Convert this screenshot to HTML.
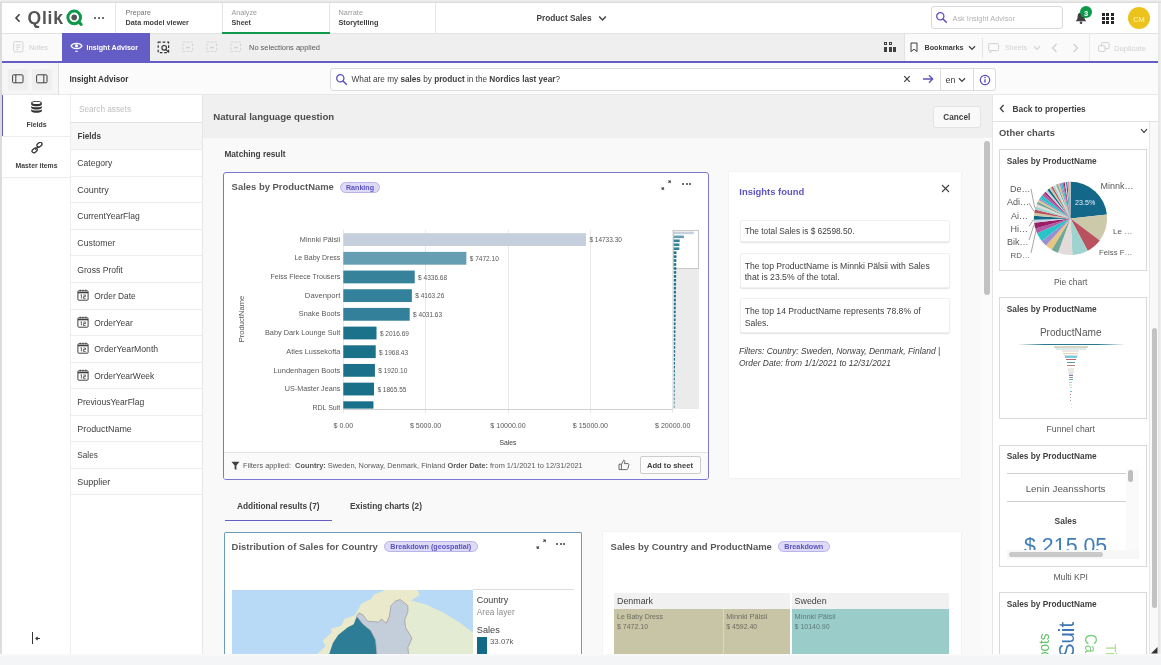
<!DOCTYPE html>
<html lang="en"><head><meta charset="utf-8"><title>Insight Advisor - Product Sales</title>
<style>
html,body{margin:0;padding:0;}
body{width:1161px;height:665px;overflow:hidden;background:#f4f5f7;position:relative;font-family:"Liberation Sans",sans-serif;}
#app{position:absolute;left:0;top:0;width:1161px;height:665px;overflow:hidden;will-change:transform;}
#app div,#app svg{position:absolute;}
#app .t{white-space:pre;}
#app .t b{font-weight:700;}
</style></head><body><div id="app">
<div style="left:2px;top:3px;width:1156px;height:652px;background:#fff;"></div>
<div style="left:0px;top:0px;width:1161px;height:3px;background:linear-gradient(#f3f3f3,#d9d9d9);"></div>
<div style="left:0px;top:2px;width:2px;height:653px;background:#dcdcdc;"></div>
<div style="left:1158px;top:3px;width:3px;height:652px;background:linear-gradient(90deg,#e4e4e4,#f0f0f0);"></div>
<div style="left:2px;top:33px;width:1156px;height:1px;background:#e3e3e3;"></div>
<svg style="left:14px;top:13.4px" width="8" height="10" viewBox="0 0 8 10"><path d="M5.6 1.2 L2 5 L5.6 8.8" fill="none" stroke="#404040" stroke-width="1.6"/></svg>
<div class="t" style="top:8.2px;font-size:17.5px;line-height:21.0px;color:#545454;font-weight:700;left:27.5px;letter-spacing:0.8px;">Qlik</div>
<svg style="left:66px;top:9px" width="19" height="19" viewBox="0 0 19 19"><circle cx="8.2" cy="8.4" r="6.3" fill="#fff" stroke="#0c9a4a" stroke-width="3"/><circle cx="8.2" cy="8.4" r="2.8" fill="#555"/><path d="M12.9 13.1 L15.2 15.4" stroke="#0c9a4a" stroke-width="3" stroke-linecap="round"/></svg>
<div style="left:94.3px;top:17px;width:2.2px;height:2.2px;background:#404040;border-radius:1.1px;"></div>
<div style="left:98.1px;top:17px;width:2.2px;height:2.2px;background:#404040;border-radius:1.1px;"></div>
<div style="left:101.89999999999999px;top:17px;width:2.2px;height:2.2px;background:#404040;border-radius:1.1px;"></div>
<div style="left:115px;top:3px;width:1px;height:30px;background:#e6e6e6;"></div>
<div style="left:222px;top:3px;width:1px;height:30px;background:#e6e6e6;"></div>
<div style="left:329px;top:3px;width:1px;height:30px;background:#e6e6e6;"></div>
<div style="left:435px;top:3px;width:1px;height:30px;background:#e6e6e6;"></div>
<div class="t" style="top:8.86px;font-size:7.17px;line-height:8.6px;color:#737373;left:125.5px;">Prepare</div>
<div class="t" style="top:19.33px;font-size:7.23px;line-height:8.68px;color:#404040;font-weight:700;left:125.5px;">Data model viewer</div>
<div class="t" style="top:8.86px;font-size:7.17px;line-height:8.6px;color:#9a9a9a;left:231.5px;">Analyze</div>
<div class="t" style="top:19.36px;font-size:7.16px;line-height:8.59px;color:#404040;font-weight:700;left:231.5px;">Sheet</div>
<div class="t" style="top:8.77px;font-size:7.35px;line-height:8.82px;color:#9a9a9a;left:338.5px;">Narrate</div>
<div class="t" style="top:19.31px;font-size:7.27px;line-height:8.72px;color:#404040;font-weight:700;left:338.5px;">Storytelling</div>
<div style="left:222px;top:32.4px;width:108px;height:1.6px;background:#109a4e;"></div>
<div class="t" style="top:14.44px;font-size:8.25px;line-height:9.9px;color:#404040;font-weight:700;left:536.5px;">Product Sales</div>
<svg style="left:598px;top:15px" width="9" height="7" viewBox="0 0 9 7"><path d="M1.2 1.5 L4.5 5 L7.8 1.5" fill="none" stroke="#404040" stroke-width="1.4"/></svg>
<div style="left:931px;top:6px;width:132px;height:23px;border:1px solid #d9d9d9;border-radius:3px;background:#fff;box-sizing:border-box;"></div>
<svg style="left:935px;top:11px" width="13" height="13" viewBox="0 0 13 13"><circle cx="5.3" cy="5.3" r="3.6" fill="none" stroke="#5b52c0" stroke-width="1.3"/><path d="M8 8 L11.3 11.3" stroke="#5b52c0" stroke-width="1.5" stroke-linecap="round"/></svg>
<div class="t" style="top:14.85px;font-size:7.4px;line-height:8.88px;color:#b3b3b3;left:952.5px;">Ask Insight Advisor</div>
<svg style="left:1074px;top:11px" width="14" height="14" viewBox="0 0 14 14"><path d="M7 1.5 C4.6 1.5 3.6 3.4 3.6 5.6 C3.6 8.2 2.6 9.2 1.8 10.2 L12.2 10.2 C11.4 9.2 10.4 8.2 10.4 5.6 C10.4 3.4 9.4 1.5 7 1.5 Z" fill="#404040"/><circle cx="7" cy="11.8" r="1.3" fill="#404040"/></svg>
<div style="left:1080px;top:6px;width:12px;height:12px;background:#0c9a4a;border-radius:6px;"></div>
<div class="t" style="top:8.6px;font-size:7.5px;line-height:9.0px;color:#fff;font-weight:700;left:886px;width:400px;text-align:center;">3</div>
<div style="left:1102.3px;top:12.6px;width:3px;height:3px;background:#262626;"></div>
<div style="left:1106.3999999999999px;top:12.6px;width:3px;height:3px;background:#262626;"></div>
<div style="left:1110.5px;top:12.6px;width:3px;height:3px;background:#262626;"></div>
<div style="left:1102.3px;top:16.7px;width:3px;height:3px;background:#262626;"></div>
<div style="left:1106.3999999999999px;top:16.7px;width:3px;height:3px;background:#262626;"></div>
<div style="left:1110.5px;top:16.7px;width:3px;height:3px;background:#262626;"></div>
<div style="left:1102.3px;top:20.799999999999997px;width:3px;height:3px;background:#262626;"></div>
<div style="left:1106.3999999999999px;top:20.799999999999997px;width:3px;height:3px;background:#262626;"></div>
<div style="left:1110.5px;top:20.799999999999997px;width:3px;height:3px;background:#262626;"></div>
<div style="left:1128px;top:7px;width:22px;height:22px;background:#ecc31d;border-radius:11px;"></div>
<div class="t" style="top:14.7px;font-size:7.5px;line-height:9.0px;color:#fff3c4;left:939px;width:400px;text-align:center;">CM</div>
<div style="left:2px;top:34px;width:1156px;height:27px;background:#efefef;"></div>
<div style="left:2px;top:34px;width:60px;height:27px;background:#fafafa;"></div>
<div style="left:904px;top:34px;width:254px;height:27px;background:#fafafa;"></div>
<div style="left:62px;top:33px;width:88px;height:28px;background:#655dc6;"></div>
<div style="left:2px;top:61px;width:1156px;height:2px;background:#655dc6;"></div>
<svg style="left:13px;top:41px" width="11" height="12" viewBox="0 0 11 12"><rect x="0.7" y="0.7" width="9.2" height="10.2" rx="1" fill="none" stroke="#d4d4d4" stroke-width="1"/><path d="M3 4 H7.5 M3 6.2 H7.5 M3 8.4 H5.5" stroke="#d4d4d4" stroke-width="0.9"/></svg>
<div class="t" style="top:44.11px;font-size:7.27px;line-height:8.72px;color:#cfcfcf;left:29px;">Notes</div>
<svg style="left:70px;top:41px" width="13" height="12" viewBox="0 0 13 12"><path d="M1 5 C3 1.6 10 1.6 12 5 C10 8.4 3 8.4 1 5 Z" fill="none" stroke="#fff" stroke-width="1.2"/><circle cx="6.5" cy="4.8" r="1.6" fill="#fff"/><path d="M5.2 10.3 H7.8" stroke="#fff" stroke-width="1.1"/></svg>
<div class="t" style="top:44.39px;font-size:7.11px;line-height:8.53px;color:#fff;font-weight:700;left:86.5px;">Insight Advisor</div>
<svg style="left:157px;top:41px" width="13" height="13" viewBox="0 0 13 13"><rect x="1.2" y="1.2" width="10.4" height="10.4" fill="none" stroke="#333" stroke-width="1.2" stroke-dasharray="2.6 1.9"/><circle cx="7.2" cy="6.8" r="2.3" fill="#efefef" stroke="#333" stroke-width="1.1"/><path d="M9 8.6 L11.6 11.2" stroke="#333" stroke-width="1.3"/></svg>
<svg style="left:182px;top:41px" width="13" height="13" viewBox="0 0 13 13"><rect x="1" y="1" width="9.5" height="9.5" fill="none" stroke="#d2d2d2" stroke-width="1" stroke-dasharray="2.2 1.6"/><path d="M4 6.5 H8" stroke="#d2d2d2" stroke-width="1.4"/></svg>
<svg style="left:206px;top:41px" width="13" height="13" viewBox="0 0 13 13"><rect x="1" y="1" width="9.5" height="9.5" fill="none" stroke="#d2d2d2" stroke-width="1" stroke-dasharray="2.2 1.6"/><path d="M4 6.5 H8" stroke="#d2d2d2" stroke-width="1.4"/></svg>
<svg style="left:230px;top:41px" width="13" height="13" viewBox="0 0 13 13"><rect x="1" y="1" width="9.5" height="9.5" fill="none" stroke="#d2d2d2" stroke-width="1" stroke-dasharray="2.2 1.6"/><path d="M4 6.5 H8" stroke="#d2d2d2" stroke-width="1.4"/></svg>
<div class="t" style="top:44.02px;font-size:7.47px;line-height:8.96px;color:#595959;left:249px;">No selections applied</div>
<div style="left:884.3px;top:42.3px;width:3px;height:3px;border:0.8px solid #404040;box-sizing:border-box;"></div>
<div style="left:888.5px;top:42.3px;width:3px;height:3px;border:0.8px solid #404040;box-sizing:border-box;"></div>
<div style="left:884.3px;top:47.2px;width:3px;height:4.6px;background:#404040;"></div>
<div style="left:888.5px;top:47.2px;width:3px;height:4.6px;background:#404040;"></div>
<div style="left:892.6999999999999px;top:47.2px;width:3px;height:4.6px;background:#404040;"></div>
<div style="left:904px;top:34px;width:1px;height:27px;background:#e3e3e3;"></div>
<svg style="left:910px;top:42px" width="8" height="11" viewBox="0 0 8 11"><path d="M1 1 H7 V9.6 L4 7.2 L1 9.6 Z" fill="none" stroke="#404040" stroke-width="1"/></svg>
<div class="t" style="top:44.26px;font-size:7.16px;line-height:8.59px;color:#404040;font-weight:700;left:924.5px;">Bookmarks</div>
<svg style="left:968px;top:45px" width="8" height="6" viewBox="0 0 8 6"><path d="M1 1.2 L4 4.4 L7 1.2" fill="none" stroke="#404040" stroke-width="1.3"/></svg>
<div style="left:982px;top:38px;width:1px;height:20px;background:#e3e3e3;"></div>
<svg style="left:988px;top:43px" width="12" height="10" viewBox="0 0 12 10"><rect x="0.6" y="0.6" width="10" height="7" rx="1" fill="none" stroke="#d0d0d0"/><path d="M1 9 H4" stroke="#d0d0d0"/></svg>
<div class="t" style="top:44.21px;font-size:7.07px;line-height:8.48px;color:#d2d2d2;left:1005px;">Sheets</div>
<svg style="left:1033px;top:45px" width="8" height="6" viewBox="0 0 8 6"><path d="M1 1.2 L4 4.4 L7 1.2" fill="none" stroke="#d2d2d2" stroke-width="1.2"/></svg>
<svg style="left:1051px;top:43px" width="7" height="10" viewBox="0 0 7 10"><path d="M5.5 1 L1.5 5 L5.5 9" fill="none" stroke="#cfcfcf" stroke-width="1.2"/></svg>
<svg style="left:1072px;top:43px" width="7" height="10" viewBox="0 0 7 10"><path d="M1.5 1 L5.5 5 L1.5 9" fill="none" stroke="#cfcfcf" stroke-width="1.2"/></svg>
<div style="left:1089px;top:34px;width:1px;height:27px;background:#e9e9e9;"></div>
<svg style="left:1098px;top:42px" width="12" height="11" viewBox="0 0 12 11"><rect x="3.6" y="0.6" width="7.5" height="6" rx="0.8" fill="none" stroke="#d0d0d0"/><rect x="0.6" y="3.8" width="6.5" height="5.6" rx="0.8" fill="#fafafa" stroke="#d0d0d0"/></svg>
<div class="t" style="top:43.91px;font-size:7.68px;line-height:9.22px;color:#d2d2d2;left:1114px;">Duplicate</div>
<div style="left:2px;top:63px;width:1156px;height:31.5px;background:#fbfbfb;"></div>
<div style="left:2px;top:63px;width:56px;height:31.5px;background:#f6f6f6;"></div>
<div style="left:2px;top:94px;width:1156px;height:1px;background:#e9e9e9;"></div>
<div style="left:58px;top:63px;width:1px;height:31px;background:#e0e0e0;"></div>
<div style="left:8px;top:68.5px;width:20px;height:21px;background:#efefef;border-radius:2px;"></div>
<div style="left:32px;top:68.5px;width:20px;height:21px;background:#efefef;border-radius:2px;"></div>
<svg style="left:12px;top:74px" width="12" height="10" viewBox="0 0 12 10"><rect x="0.6" y="0.8" width="10.4" height="8" rx="1" fill="none" stroke="#404040" stroke-width="1"/><path d="M3.8 1 V8.8" stroke="#404040" stroke-width="1"/></svg>
<svg style="left:36px;top:74px" width="12" height="10" viewBox="0 0 12 10"><rect x="0.6" y="0.8" width="10.4" height="8" rx="1" fill="none" stroke="#404040" stroke-width="1"/><path d="M7.8 1 V8.8" stroke="#404040" stroke-width="1"/></svg>
<div class="t" style="top:75.39px;font-size:8.15px;line-height:9.78px;color:#333;font-weight:700;left:69.5px;">Insight Advisor</div>
<div style="left:330px;top:68px;width:666px;height:22.5px;background:#fff;border:1px solid #dcdcdc;border-radius:3px;box-sizing:border-box;"></div>
<svg style="left:335px;top:73px" width="13" height="13" viewBox="0 0 13 13"><circle cx="5.3" cy="5.3" r="3.6" fill="none" stroke="#5b52c0" stroke-width="1.3"/><path d="M8 8 L11.3 11.3" stroke="#5b52c0" stroke-width="1.5" stroke-linecap="round"/></svg>
<div class="t" style="left:351.6px;top:75.36px;font-size:8.21px;line-height:9.85px;color:#404040;">What are my <b>sales</b> by <b>product</b> in the <b>Nordics last year</b>?</div>
<svg style="left:903px;top:75px" width="8" height="8" viewBox="0 0 8 8"><path d="M1.2 1.2 L6.8 6.8 M6.8 1.2 L1.2 6.8" stroke="#404040" stroke-width="1.2"/></svg>
<svg style="left:922px;top:74px" width="12" height="10" viewBox="0 0 12 10"><path d="M1 5 H10.5 M7 1.3 L10.7 5 L7 8.7" fill="none" stroke="#5b52c0" stroke-width="1.3"/></svg>
<div style="left:939.5px;top:68px;width:1px;height:22.5px;background:#dcdcdc;"></div>
<div class="t" style="top:74.88px;font-size:8.99px;line-height:10.79px;color:#404040;left:945.5px;">en</div>
<svg style="left:958px;top:76.5px" width="8" height="6" viewBox="0 0 8 6"><path d="M1 1.2 L4 4.4 L7 1.2" fill="none" stroke="#404040" stroke-width="1.3"/></svg>
<div style="left:973px;top:68px;width:1px;height:22.5px;background:#dcdcdc;"></div>
<svg style="left:978.5px;top:73.5px" width="12" height="12" viewBox="0 0 12 12"><circle cx="6" cy="6" r="4.7" fill="none" stroke="#5b52c0" stroke-width="1.2"/><path d="M6 5.2 V8.6" stroke="#5b52c0" stroke-width="1.4"/><circle cx="6" cy="3.5" r="0.8" fill="#5b52c0"/></svg>
<div style="left:2px;top:95px;width:68px;height:559px;background:#fff;"></div>
<div style="left:70px;top:95px;width:1px;height:559px;background:#ededed;"></div>
<div style="left:2px;top:95px;width:1px;height:41px;background:#655dc6;"></div>
<div style="left:2px;top:136px;width:68px;height:1px;background:#ececec;"></div>
<div style="left:2px;top:177px;width:68px;height:1px;background:#ececec;"></div>
<svg style="left:30px;top:99.5px" width="13" height="14" viewBox="0 0 13 14"><g fill="#333"><path d="M1.2 9.2 C1.2 11 11.8 11 11.8 9.2 V11 C11.8 13.4 1.2 13.4 1.2 11 Z"/><path d="M1.2 5.9 C1.2 7.7 11.8 7.7 11.8 5.9 V7.7 C11.8 10.1 1.2 10.1 1.2 7.7 Z"/><path d="M1.2 2.8 C1.2 0.4 11.8 0.4 11.8 2.8 V4.4 C11.8 6.8 1.2 6.8 1.2 4.4 Z"/></g><ellipse cx="6.5" cy="2.9" rx="4" ry="1.1" fill="#fff"/></svg>
<div class="t" style="top:120.68px;font-size:6.92px;line-height:8.3px;color:#404040;font-weight:700;left:-163.5px;width:400px;text-align:center;">Fields</div>
<svg style="left:30.5px;top:141.5px" width="12" height="12" viewBox="0 0 12 12"><rect x="5.6" y="0.9" width="5.6" height="3.6" rx="1.8" transform="rotate(-40 8.4 2.7)" fill="none" stroke="#333" stroke-width="1.3"/><rect x="0.8" y="6.6" width="5.6" height="3.6" rx="1.8" transform="rotate(-40 3.6 8.4)" fill="none" stroke="#333" stroke-width="1.3"/><path d="M4.2 7.4 L7.6 4.4" stroke="#333" stroke-width="1.3"/></svg>
<div class="t" style="top:162.0px;font-size:6.87px;line-height:8.24px;color:#404040;font-weight:700;left:-163.5px;width:400px;text-align:center;">Master items</div>
<div style="left:32px;top:632px;width:1.2px;height:12px;background:#333;"></div>
<svg style="left:34.5px;top:635.5px" width="6" height="5" viewBox="0 0 6 5"><path d="M1 2.5 H5 M2.6 0.8 L0.9 2.5 L2.6 4.2" fill="none" stroke="#333" stroke-width="1.1"/></svg>
<div style="left:71px;top:95px;width:131px;height:559px;background:#fff;"></div>
<div style="left:202px;top:95px;width:1px;height:559px;background:#e6e6e6;"></div>
<div class="t" style="top:104.56px;font-size:8.21px;line-height:9.85px;color:#bdbdbd;left:79px;">Search assets</div>
<div style="left:71px;top:122px;width:131px;height:1px;background:#e3e3e3;"></div>
<div style="left:71px;top:123px;width:131px;height:26px;background:#f7f7f7;"></div>
<div class="t" style="top:132.4px;font-size:8.13px;line-height:9.76px;color:#404040;font-weight:700;left:77.5px;">Fields</div>
<div style="left:71px;top:149.1px;width:131px;height:1px;background:#ececec;"></div>
<div class="t" style="top:158.26px;font-size:8.63px;line-height:10.36px;color:#404040;left:77.3px;">Category</div>
<div style="left:71px;top:175.7px;width:131px;height:1px;background:#ececec;"></div>
<div class="t" style="top:184.64px;font-size:9.0px;line-height:10.8px;color:#404040;left:77.3px;">Country</div>
<div style="left:71px;top:202.2px;width:131px;height:1px;background:#ececec;"></div>
<div class="t" style="top:211.41px;font-size:8.56px;line-height:10.27px;color:#404040;left:77.3px;">CurrentYearFlag</div>
<div style="left:71px;top:228.8px;width:131px;height:1px;background:#ececec;"></div>
<div class="t" style="top:237.87px;font-size:8.77px;line-height:10.52px;color:#404040;left:77.3px;">Customer</div>
<div style="left:71px;top:255.4px;width:131px;height:1px;background:#ececec;"></div>
<div class="t" style="top:264.5px;font-size:8.62px;line-height:10.34px;color:#404040;left:77.3px;">Gross Profit</div>
<div style="left:71px;top:281.9px;width:131px;height:1px;background:#ececec;"></div>
<svg style="left:77px;top:288.9px" width="12" height="12" viewBox="0 0 12 12"><rect x="0.9" y="1.8" width="10.2" height="9.4" rx="0.8" fill="#fff" stroke="#404040" stroke-width="1"/><path d="M1 3.6 H11" stroke="#404040" stroke-width="1.4"/><path d="M3.2 0.6 V2.4 M6 0.6 V2.4 M8.8 0.6 V2.4" stroke="#404040" stroke-width="1"/><path d="M3.6 6 L4.4 5.6 V9.4 M6.4 6 H8.4 V7.6 H6.4 V9.4 H8.6" fill="none" stroke="#404040" stroke-width="0.8"/></svg>
<div class="t" style="top:291.17px;font-size:8.39px;line-height:10.07px;color:#404040;left:94.3px;">Order Date</div>
<div style="left:71px;top:308.5px;width:131px;height:1px;background:#ececec;"></div>
<svg style="left:77px;top:315.5px" width="12" height="12" viewBox="0 0 12 12"><rect x="0.9" y="1.8" width="10.2" height="9.4" rx="0.8" fill="#fff" stroke="#404040" stroke-width="1"/><path d="M1 3.6 H11" stroke="#404040" stroke-width="1.4"/><path d="M3.2 0.6 V2.4 M6 0.6 V2.4 M8.8 0.6 V2.4" stroke="#404040" stroke-width="1"/><path d="M3.6 6 L4.4 5.6 V9.4 M6.4 6 H8.4 V7.6 H6.4 V9.4 H8.6" fill="none" stroke="#404040" stroke-width="0.8"/></svg>
<div class="t" style="top:317.72px;font-size:8.41px;line-height:10.09px;color:#404040;left:94.3px;">OrderYear</div>
<div style="left:71px;top:335.0px;width:131px;height:1px;background:#ececec;"></div>
<svg style="left:77px;top:342.0px" width="12" height="12" viewBox="0 0 12 12"><rect x="0.9" y="1.8" width="10.2" height="9.4" rx="0.8" fill="#fff" stroke="#404040" stroke-width="1"/><path d="M1 3.6 H11" stroke="#404040" stroke-width="1.4"/><path d="M3.2 0.6 V2.4 M6 0.6 V2.4 M8.8 0.6 V2.4" stroke="#404040" stroke-width="1"/><path d="M3.6 6 L4.4 5.6 V9.4 M6.4 6 H8.4 V7.6 H6.4 V9.4 H8.6" fill="none" stroke="#404040" stroke-width="0.8"/></svg>
<div class="t" style="top:344.14px;font-size:8.7px;line-height:10.44px;color:#404040;left:94.3px;">OrderYearMonth</div>
<div style="left:71px;top:361.6px;width:131px;height:1px;background:#ececec;"></div>
<svg style="left:77px;top:368.6px" width="12" height="12" viewBox="0 0 12 12"><rect x="0.9" y="1.8" width="10.2" height="9.4" rx="0.8" fill="#fff" stroke="#404040" stroke-width="1"/><path d="M1 3.6 H11" stroke="#404040" stroke-width="1.4"/><path d="M3.2 0.6 V2.4 M6 0.6 V2.4 M8.8 0.6 V2.4" stroke="#404040" stroke-width="1"/><path d="M3.6 6 L4.4 5.6 V9.4 M6.4 6 H8.4 V7.6 H6.4 V9.4 H8.6" fill="none" stroke="#404040" stroke-width="0.8"/></svg>
<div class="t" style="top:370.83px;font-size:8.43px;line-height:10.12px;color:#404040;left:94.3px;">OrderYearWeek</div>
<div style="left:71px;top:388.2px;width:131px;height:1px;background:#ececec;"></div>
<div class="t" style="top:397.34px;font-size:8.53px;line-height:10.24px;color:#404040;left:77.3px;">PreviousYearFlag</div>
<div style="left:71px;top:414.7px;width:131px;height:1px;background:#ececec;"></div>
<div class="t" style="top:423.72px;font-size:8.91px;line-height:10.69px;color:#404040;left:77.3px;">ProductName</div>
<div style="left:71px;top:441.3px;width:131px;height:1px;background:#ececec;"></div>
<div class="t" style="top:450.62px;font-size:8.2px;line-height:9.84px;color:#404040;left:77.3px;">Sales</div>
<div style="left:71px;top:467.8px;width:131px;height:1px;background:#ececec;"></div>
<div class="t" style="top:476.8px;font-size:8.99px;line-height:10.79px;color:#404040;left:77.3px;">Supplier</div>
<div style="left:71px;top:494.4px;width:131px;height:1px;background:#ececec;"></div>
<div style="left:203px;top:95px;width:789px;height:559px;background:#f9f9f9;"></div>
<div style="left:203px;top:95px;width:789px;height:42.5px;background:#f0f0f0;"></div>
<div class="t" style="top:111.07px;font-size:9.64px;line-height:11.57px;color:#4d4d4d;font-weight:700;left:213.3px;">Natural language question</div>
<div style="left:932.5px;top:106px;width:48.5px;height:21.5px;background:#f9f9f9;border:1px solid #e4e4e4;border-radius:3px;box-sizing:border-box;"></div>
<div class="t" style="top:113.05px;font-size:8.23px;line-height:9.88px;color:#404040;font-weight:700;left:756.8px;width:400px;text-align:center;">Cancel</div>
<div class="t" style="top:150.22px;font-size:8.28px;line-height:9.94px;color:#404040;font-weight:700;left:224.4px;">Matching result</div>
<div style="left:983px;top:137.5px;width:9px;height:517px;background:#fbfbfb;"></div>
<div style="left:984.3px;top:140.5px;width:5.5px;height:154.5px;background:#c2c2c2;border-radius:3px;"></div>
<div style="left:223px;top:171.5px;width:485.7px;height:308.5px;background:#fff;border:1.6px solid #7d76d3;border-radius:3px;box-sizing:border-box;"></div>
<div class="t" style="top:181.26px;font-size:9.45px;line-height:11.34px;color:#595959;font-weight:700;left:231.6px;">Sales by ProductName</div>
<div style="left:340px;top:181.5px;width:40px;height:11.2px;background:#dddaf6;border:1px solid #b9b3ea;border-radius:6px;box-sizing:border-box;"></div>
<div class="t" style="top:183.79px;font-size:7.1px;line-height:8.52px;color:#5b52c0;font-weight:700;left:160px;width:400px;text-align:center;">Ranking</div>
<svg style="left:660px;top:179px" width="12" height="12" viewBox="0 0 12 12"><path d="M7.8 1.4 H10.8 V4.4 Z M1.6 7.8 V10.8 H4.6 Z" fill="#404040"/><path d="M8.4 3.8 L9.8 2.4 M2.6 9.8 L4 8.4" stroke="#404040" stroke-width="1.1"/></svg>
<div style="left:682.3px;top:183.4px;width:2px;height:2px;background:#404040;border-radius:1px;"></div>
<div style="left:685.8px;top:183.4px;width:2px;height:2px;background:#404040;border-radius:1px;"></div>
<div style="left:689.3px;top:183.4px;width:2px;height:2px;background:#404040;border-radius:1px;"></div>
<div style="left:342.8px;top:229.5px;width:1px;height:183px;background:#e9e9e9;"></div>
<div style="left:425.1px;top:229.5px;width:1px;height:183px;background:#e9e9e9;"></div>
<div style="left:507.5px;top:229.5px;width:1px;height:183px;background:#e9e9e9;"></div>
<div style="left:589.9px;top:229.5px;width:1px;height:183px;background:#e9e9e9;"></div>
<div style="left:672.2px;top:229.5px;width:1px;height:183px;background:#e9e9e9;"></div>
<div style="left:343.3px;top:408.6px;width:330px;height:1px;background:#d0d0d0;"></div>
<div class="t" style="top:235.6px;font-size:7.29px;line-height:8.75px;color:#595959;left:-59.69999999999999px;width:400px;text-align:right;">Minnki Pälsii</div>
<div class="t" style="top:236.48px;font-size:6.49px;line-height:7.79px;color:#595959;left:589.4px;">$ 14733.30</div>
<div class="t" style="top:254.44px;font-size:7.01px;line-height:8.41px;color:#595959;left:-59.69999999999999px;width:400px;text-align:right;">Le Baby Dress</div>
<div class="t" style="top:255.17px;font-size:6.52px;line-height:7.82px;color:#595959;left:469.8px;">$ 7472.10</div>
<div class="t" style="top:273.08px;font-size:7.12px;line-height:8.54px;color:#595959;left:-59.69999999999999px;width:400px;text-align:right;">Feiss Fleece Trousers</div>
<div class="t" style="top:273.87px;font-size:6.52px;line-height:7.82px;color:#595959;left:418.1px;">$ 4336.68</div>
<div class="t" style="top:291.41px;font-size:7.69px;line-height:9.23px;color:#595959;left:-59.69999999999999px;width:400px;text-align:right;">Davenport</div>
<div class="t" style="top:292.47px;font-size:6.52px;line-height:7.82px;color:#595959;left:415.3px;">$ 4163.26</div>
<div class="t" style="top:310.29px;font-size:7.32px;line-height:8.78px;color:#595959;left:-59.69999999999999px;width:400px;text-align:right;">Snake Boots</div>
<div class="t" style="top:311.17px;font-size:6.52px;line-height:7.82px;color:#595959;left:413.1px;">$ 4031.63</div>
<div class="t" style="top:328.98px;font-size:7.34px;line-height:8.81px;color:#595959;left:-59.69999999999999px;width:400px;text-align:right;">Baby Dark Lounge Suit</div>
<div class="t" style="top:329.87px;font-size:6.52px;line-height:7.82px;color:#595959;left:379.9px;">$ 2016.69</div>
<div class="t" style="top:347.67px;font-size:7.36px;line-height:8.83px;color:#595959;left:-59.69999999999999px;width:400px;text-align:right;">Atles Lussekofta</div>
<div class="t" style="top:348.57px;font-size:6.52px;line-height:7.82px;color:#595959;left:379.1px;">$ 1968.43</div>
<div class="t" style="top:366.31px;font-size:7.48px;line-height:8.98px;color:#595959;left:-59.69999999999999px;width:400px;text-align:right;">Lundenhagen Boots</div>
<div class="t" style="top:367.27px;font-size:6.52px;line-height:7.82px;color:#595959;left:378.3px;">$ 1920.10</div>
<div class="t" style="top:385.05px;font-size:7.19px;line-height:8.63px;color:#595959;left:-59.69999999999999px;width:400px;text-align:right;">US-Master Jeans</div>
<div class="t" style="top:385.87px;font-size:6.52px;line-height:7.82px;color:#595959;left:377.4px;">$ 1865.55</div>
<div class="t" style="top:403.81px;font-size:7.06px;line-height:8.47px;color:#595959;left:-59.69999999999999px;width:400px;text-align:right;">RDL Suit</div>
<svg style="left:330px;top:225px" width="370" height="190" viewBox="0 0 370 190"><rect x="13.3" y="8.2" width="242.66" height="12.8" fill="#c5d0dc"/><rect x="13.3" y="26.88" width="123.07" height="12.8" fill="#659db2"/><rect x="13.3" y="45.56" width="71.43" height="12.8" fill="#35829a"/><rect x="13.3" y="64.24" width="68.57" height="12.8" fill="#33819a"/><rect x="13.3" y="82.92" width="66.4" height="12.8" fill="#328099"/><rect x="13.3" y="101.6" width="33.21" height="12.8" fill="#1d728b"/><rect x="13.3" y="120.28" width="32.42" height="12.8" fill="#1c718a"/><rect x="13.3" y="138.96" width="31.62" height="12.8" fill="#1b708a"/><rect x="13.3" y="157.64" width="30.73" height="12.8" fill="#1a7089"/><rect x="13.3" y="176.32" width="30.14" height="7.28" fill="#19708a"/></svg>
<div class="t" style="top:422.12px;font-size:7.05px;line-height:8.46px;color:#595959;left:143.3px;width:400px;text-align:center;">$ 0.00</div>
<div class="t" style="top:422.12px;font-size:7.05px;line-height:8.46px;color:#595959;left:225.60000000000002px;width:400px;text-align:center;">$ 5000.00</div>
<div class="t" style="top:422.12px;font-size:7.05px;line-height:8.46px;color:#595959;left:308.0px;width:400px;text-align:center;">$ 10000.00</div>
<div class="t" style="top:422.12px;font-size:7.05px;line-height:8.46px;color:#595959;left:390.4px;width:400px;text-align:center;">$ 15000.00</div>
<div class="t" style="top:422.12px;font-size:7.05px;line-height:8.46px;color:#595959;left:472.70000000000005px;width:400px;text-align:center;">$ 20000.00</div>
<div class="t" style="top:438.74px;font-size:6.8px;line-height:8.16px;color:#404040;left:308px;width:400px;text-align:center;">Sales</div>
<div class="t" style="left:142.4px;top:313.5px;width:200px;text-align:center;font-size:7.6px;line-height:10px;color:#595959;transform:rotate(-90deg);">ProductName</div>
<div style="left:672.8px;top:229.5px;width:26.5px;height:179.5px;background:#ebebeb;"></div>
<div style="left:672.8px;top:229.5px;width:26.5px;height:39.5px;background:#fff;border:1px solid #c9c9c9;box-sizing:border-box;"></div>
<svg style="left:672.8px;top:229.5px" width="27" height="180" viewBox="0 0 27 180"><rect x="0.8" y="1.6" width="20" height="2.6" fill="#c5d0dc"/><rect x="0.8" y="5.55" width="10.1" height="2.6" fill="#659db2"/><rect x="0.8" y="9.5" width="5.9" height="2.6" fill="#35829a"/><rect x="0.8" y="13.45" width="5.6" height="2.6" fill="#33819a"/><rect x="0.8" y="17.4" width="5.5" height="2.6" fill="#328099"/><rect x="0.8" y="21.35" width="2.7" height="2.6" fill="#1d728b"/><rect x="0.8" y="25.3" width="2.7" height="2.6" fill="#1d728b"/><rect x="0.8" y="29.25" width="2.6" height="2.6" fill="#1d728b"/><rect x="0.8" y="33.2" width="2.5" height="2.6" fill="#1d728b"/><rect x="0.8" y="37.15" width="2.5" height="2.6" fill="#1d728b"/><rect x="0.8" y="41.1" width="2.4" height="2.6" fill="#1d728b"/><rect x="0.8" y="45.05" width="2.35" height="2.6" fill="#1d728b"/><rect x="0.8" y="49.0" width="2.3" height="2.6" fill="#1d728b"/><rect x="0.8" y="52.95" width="2.24" height="2.6" fill="#1d728b"/><rect x="0.8" y="56.9" width="2.19" height="2.6" fill="#1d728b"/><rect x="0.8" y="60.85" width="2.14" height="2.6" fill="#1d728b"/><rect x="0.8" y="64.8" width="2.09" height="2.6" fill="#1d728b"/><rect x="0.8" y="68.75" width="2.04" height="2.6" fill="#1d728b"/><rect x="0.8" y="72.7" width="1.98" height="2.6" fill="#1d728b"/><rect x="0.8" y="76.65" width="1.93" height="2.6" fill="#1d728b"/><rect x="0.8" y="80.6" width="1.88" height="2.6" fill="#1d728b"/><rect x="0.8" y="84.55" width="1.83" height="2.6" fill="#1d728b"/><rect x="0.8" y="88.5" width="1.78" height="2.6" fill="#1d728b"/><rect x="0.8" y="92.45" width="1.72" height="2.6" fill="#1d728b"/><rect x="0.8" y="96.4" width="1.67" height="2.6" fill="#1d728b"/><rect x="0.8" y="100.35" width="1.62" height="2.6" fill="#1d728b"/><rect x="0.8" y="104.3" width="1.57" height="2.6" fill="#1d728b"/><rect x="0.8" y="108.25" width="1.52" height="2.6" fill="#1d728b"/><rect x="0.8" y="112.2" width="1.46" height="2.6" fill="#1d728b"/><rect x="0.8" y="116.15" width="1.41" height="2.6" fill="#1d728b"/><rect x="0.8" y="120.1" width="1.36" height="2.6" fill="#1d728b"/><rect x="0.8" y="124.05" width="1.31" height="2.6" fill="#1d728b"/><rect x="0.8" y="128.0" width="1.26" height="2.6" fill="#1d728b"/><rect x="0.8" y="131.95" width="1.2" height="2.6" fill="#1d728b"/><rect x="0.8" y="135.9" width="1.15" height="2.6" fill="#1d728b"/><rect x="0.8" y="139.85" width="1.1" height="2.6" fill="#1d728b"/><rect x="0.8" y="143.8" width="1.05" height="2.6" fill="#1d728b"/><rect x="0.8" y="147.75" width="1.0" height="2.6" fill="#1d728b"/><rect x="0.8" y="151.7" width="0.94" height="2.6" fill="#1d728b"/><rect x="0.8" y="155.65" width="0.89" height="2.6" fill="#1d728b"/><rect x="0.8" y="159.6" width="0.84" height="2.6" fill="#1d728b"/><rect x="0.8" y="163.55" width="0.79" height="2.6" fill="#1d728b"/><rect x="0.8" y="167.5" width="0.74" height="2.6" fill="#1d728b"/><rect x="0.8" y="171.45" width="0.68" height="2.6" fill="#1d728b"/><rect x="0.8" y="175.4" width="0.63" height="2.6" fill="#1d728b"/></svg>
<div style="left:224.3px;top:452.4px;width:484px;height:26.3px;background:#fafafa;border-top:1px solid #e3e3e3;box-sizing:border-box;border-radius:0 0 2px 2px;"></div>
<svg style="left:231px;top:461px" width="9" height="10" viewBox="0 0 9 10"><path d="M0.5 0.8 H8.5 L5.4 4.6 V9 L3.6 8 V4.6 Z" fill="#404040"/></svg>
<div class="t" style="left:243px;top:462.15px;font-size:7.39px;line-height:8.87px;color:#595959;">Filters applied:  <b>Country:</b> Sweden, Norway, Denmark, Finland <b>Order Date:</b> from 1/1/2021 to 12/31/2021</div>
<svg style="left:618px;top:459px" width="12" height="12" viewBox="0 0 12 12"><path d="M1 5.2 H3.4 V10.6 H1 Z M3.4 5.6 L5.6 1.2 C6.8 1.2 7 2.2 6.8 3 L6.4 4.6 H10 C10.8 4.6 11 5.4 10.8 6 L9.8 9.8 C9.6 10.4 9.2 10.6 8.6 10.6 H3.4" fill="none" stroke="#595959" stroke-width="0.9"/></svg>
<div style="left:639.6px;top:455.7px;width:61px;height:18.5px;background:#fcfcfc;border:1px solid #cccccc;border-radius:2px;box-sizing:border-box;"></div>
<div class="t" style="top:460.65px;font-size:7.6px;line-height:9.12px;color:#404040;font-weight:700;left:470px;width:400px;text-align:center;">Add to sheet</div>
<div style="left:729px;top:171.5px;width:231.5px;height:306.5px;background:#fff;box-shadow:0 0 2px rgba(0,0,0,0.08);"></div>
<div class="t" style="top:185.67px;font-size:9.44px;line-height:11.33px;color:#5e55c1;font-weight:700;left:739.3px;">Insights found</div>
<svg style="left:940.5px;top:183.5px" width="9" height="9" viewBox="0 0 9 9"><path d="M1 1 L8 8 M8 1 L1 8" stroke="#404040" stroke-width="1.1"/></svg>
<div style="left:739.6px;top:220px;width:210.8px;height:22.3px;background:#fff;border:1px solid #f0f0f0;box-shadow:0 1px 1.2px rgba(0,0,0,0.11);box-sizing:border-box;border-radius:2px;"></div>
<div style="left:739.6px;top:253px;width:210.8px;height:34.5px;background:#fff;border:1px solid #f0f0f0;box-shadow:0 1px 1.2px rgba(0,0,0,0.11);box-sizing:border-box;border-radius:2px;"></div>
<div style="left:739.6px;top:298.3px;width:210.8px;height:34.5px;background:#fff;border:1px solid #f0f0f0;box-shadow:0 1px 1.2px rgba(0,0,0,0.11);box-sizing:border-box;border-radius:2px;"></div>
<div class="t" style="top:227.21px;font-size:8.31px;line-height:9.97px;color:#404040;left:744.7px;">The total Sales is $ 62598.50.</div>
<div class="t" style="top:260.55px;font-size:8.64px;line-height:10.37px;color:#404040;left:744.7px;">The top ProductName is Minnki Pälsii with Sales</div>
<div class="t" style="top:272.45px;font-size:8.64px;line-height:10.37px;color:#404040;left:744.7px;">that is 23.5% of the total.</div>
<div class="t" style="top:305.66px;font-size:8.63px;line-height:10.36px;color:#404040;left:744.7px;">The top 14 ProductName represents 78.8% of</div>
<div class="t" style="top:317.86px;font-size:8.63px;line-height:10.36px;color:#404040;left:744.7px;">Sales.</div>
<div class="t" style="top:345.74px;font-size:8.46px;line-height:10.15px;color:#404040;font-style:italic;left:739px;">Filters: Country: Sweden, Norway, Denmark, Finland |</div>
<div class="t" style="top:357.66px;font-size:8.41px;line-height:10.09px;color:#404040;font-style:italic;left:739px;">Order Date: from 1/1/2021 to 12/31/2021</div>
<div class="t" style="top:501.62px;font-size:8.3px;line-height:9.96px;color:#404040;font-weight:700;left:237px;">Additional results (7)</div>
<div class="t" style="top:501.62px;font-size:8.3px;line-height:9.96px;color:#404040;font-weight:700;left:350px;">Existing charts (2)</div>
<div style="left:225.4px;top:519.7px;width:106.6px;height:1.8px;background:#655dc6;"></div>
<div style="left:223.5px;top:531.5px;width:358px;height:125px;background:#fff;border:1.1px solid #6c9bb8;border-bottom:none;border-radius:2px 2px 0 0;box-sizing:border-box;"></div>
<div class="t" style="top:541.05px;font-size:9.48px;line-height:11.38px;color:#595959;font-weight:700;left:231.6px;">Distribution of Sales for Country</div>
<div style="left:384px;top:541px;width:93.5px;height:11.2px;background:#dddaf6;border:1px solid #b9b3ea;border-radius:6px;box-sizing:border-box;"></div>
<div class="t" style="top:543.25px;font-size:7.18px;line-height:8.62px;color:#5b52c0;font-weight:700;left:230.7px;width:400px;text-align:center;">Breakdown (geospatial)</div>
<svg style="left:534.5px;top:538px" width="12" height="12" viewBox="0 0 12 12"><path d="M7.8 1.4 H10.8 V4.4 Z M1.6 7.8 V10.8 H4.6 Z" fill="#404040"/><path d="M8.4 3.8 L9.8 2.4 M2.6 9.8 L4 8.4" stroke="#404040" stroke-width="1.1"/></svg>
<div style="left:556.3px;top:542.8px;width:2px;height:2px;background:#404040;border-radius:1px;"></div>
<div style="left:559.8px;top:542.8px;width:2px;height:2px;background:#404040;border-radius:1px;"></div>
<div style="left:563.3px;top:542.8px;width:2px;height:2px;background:#404040;border-radius:1px;"></div>
<svg style="left:232px;top:589.5px" width="241" height="64.5" viewBox="0 0 241 64.5"><rect width="241" height="64.5" fill="#b9daf6"/><polygon points="84.5,65.0 93.8,56.0 90.7,50.7 100.0,42.0 98.4,38.9 109.3,35.8 112.4,29.0 123.2,25.0 129.4,13.5 138.7,9.5 141.8,4.8 154.2,-0.2 185.2,-0.2 187.7,4.8 179.0,10.4 194.6,14.7 210.1,21.9 225.6,31.2 241.1,42.6 241.1,65.0" fill="#eae9cc"/><polygon points="176.6,21.9 182.8,12.6 194.6,15.3 210.1,22.5 225.6,31.8 241.1,43.3 241.1,65.0 177.2,65.0 176.6,57.5 180.6,48.2 174.1,37.4 173.5,29.6" fill="#e3ebd2"/><polygon points="96.9,65.0 100.9,52.9 106.2,45.1 115.5,37.4 121.7,34.3 124.8,26.5 131.0,34.3 138.7,40.5 143.4,49.8 144.9,65.0" fill="#2d7d96"/><polygon points="124.8,26.5 127.0,22.8 131.0,25.0 135.6,31.2 146.5,32.1 149.6,29.0 154.2,33.3 157.3,26.5 158.9,15.7 163.5,11.0 168.2,9.5 175.9,15.7 175.9,21.9 172.8,29.6 173.5,37.4 180.0,48.2 175.9,57.5 176.6,65.0 144.9,65.0 143.4,49.8 138.7,40.5 131.0,34.3" fill="#c4cedb" stroke="#8d8d8d" stroke-width="0.6"/></svg>
<div style="left:473px;top:589px;width:101px;height:1px;background:#dcdcdc;"></div>
<div class="t" style="top:595.18px;font-size:9.0px;line-height:10.8px;color:#404040;left:476.8px;">Country</div>
<div class="t" style="top:607.3px;font-size:8.34px;line-height:10.01px;color:#8c8c8c;left:476.8px;">Area layer</div>
<div class="t" style="top:625.09px;font-size:9.19px;line-height:11.03px;color:#404040;left:476.8px;">Sales</div>
<div style="left:477px;top:636.5px;width:10px;height:18px;background:#136a86;"></div>
<div class="t" style="top:636.74px;font-size:7.83px;line-height:9.4px;color:#595959;left:490px;">33.07k</div>
<div style="left:603px;top:532px;width:357.5px;height:124px;background:#fff;box-shadow:0 0 1.5px rgba(0,0,0,0.10);"></div>
<div class="t" style="top:541.04px;font-size:9.49px;line-height:11.39px;color:#595959;font-weight:700;left:610.6px;">Sales by Country and ProductName</div>
<div style="left:778px;top:541px;width:51.5px;height:11.2px;background:#dddaf6;border:1px solid #b9b3ea;border-radius:6px;box-sizing:border-box;"></div>
<div class="t" style="top:543.22px;font-size:7.24px;line-height:8.69px;color:#5b52c0;font-weight:700;left:603.8px;width:400px;text-align:center;">Breakdown</div>
<div style="left:614.4px;top:592.6px;width:176px;height:16px;background:#f1f1f1;"></div>
<div style="left:791.8px;top:592.6px;width:157.5px;height:16px;background:#f1f1f1;"></div>
<div style="left:614.4px;top:608.6px;width:176px;height:46px;background:#dad8c2;"></div>
<div style="left:614.4px;top:608.6px;width:108.6px;height:46px;background:#c8c5a7;"></div>
<div style="left:724px;top:608.6px;width:66.4px;height:46px;background:#c8c5a7;"></div>
<div style="left:792px;top:608.6px;width:157.3px;height:46px;background:#9acdca;"></div>
<div class="t" style="top:596.43px;font-size:8.9px;line-height:10.68px;color:#404040;left:617px;">Denmark</div>
<div class="t" style="top:596.43px;font-size:8.9px;line-height:10.68px;color:#404040;left:794.6px;">Sweden</div>
<div class="t" style="top:613.34px;font-size:7.01px;line-height:8.41px;color:#6b6b5e;left:617px;">Le Baby Dress</div>
<div class="t" style="top:623.36px;font-size:6.97px;line-height:8.36px;color:#6b6b5e;left:617px;">$ 7472.10</div>
<div class="t" style="top:613.16px;font-size:7.38px;line-height:8.86px;color:#6b6b5e;left:726.2px;">Minnki Pälsii</div>
<div class="t" style="top:623.36px;font-size:6.97px;line-height:8.36px;color:#6b6b5e;left:726.2px;">$ 4592.40</div>
<div class="t" style="top:613.16px;font-size:7.38px;line-height:8.86px;color:#5d7a78;left:794.6px;">Minnki Pälsii</div>
<div class="t" style="top:623.34px;font-size:6.99px;line-height:8.39px;color:#5d7a78;left:794.6px;">$ 10140.90</div>
<div style="left:992px;top:95px;width:1px;height:559px;background:#e6e6e6;"></div>
<div style="left:993px;top:95px;width:165px;height:559px;background:#fff;"></div>
<div style="left:993px;top:121px;width:165px;height:1px;background:#e3e3e3;"></div>
<div style="left:1149px;top:122px;width:1px;height:532px;background:#e6e6e6;"></div>
<div style="left:1150px;top:122px;width:8px;height:532px;background:#f9f9f9;"></div>
<svg style="left:999px;top:104px" width="6" height="9" viewBox="0 0 6 9"><path d="M4.6 1 L1.4 4.5 L4.6 8" fill="none" stroke="#404040" stroke-width="1.3"/></svg>
<div class="t" style="top:104.39px;font-size:8.35px;line-height:10.02px;color:#404040;font-weight:700;left:1012.5px;">Back to properties</div>
<div class="t" style="top:126.68px;font-size:9.42px;line-height:11.3px;color:#505050;font-weight:700;left:999px;">Other charts</div>
<svg style="left:1140px;top:128px" width="8" height="6" viewBox="0 0 8 6"><path d="M1 1.2 L4 4.4 L7 1.2" fill="none" stroke="#404040" stroke-width="1.2"/></svg>
<div style="left:1152px;top:328px;width:5px;height:280px;background:#c2c2c2;border-radius:3px;"></div>
<svg style="left:1150px;top:646px" width="8" height="8" viewBox="0 0 8 8"><path d="M7.5 1 V7.5 H1 Z" fill="#333"/></svg>
<div style="left:999px;top:149px;width:148px;height:122px;background:#fff;border:1px solid #d9d9d9;box-sizing:border-box;"></div>
<div class="t" style="top:156.82px;font-size:8.3px;line-height:9.96px;color:#404040;font-weight:700;left:1006.8px;">Sales by ProductName</div>
<svg style="left:1000px;top:150px" width="146" height="120" viewBox="0 0 146 120"><path d="M70.5,68.4 L70.5,31.8 A36.6,36.6 0 0 1 106.9,64.57 Z" fill="#13688a"/><path d="M70.5,68.4 L106.9,64.57 A36.6,36.6 0 0 1 99.73,90.43 Z" fill="#cbc9a9"/><path d="M70.5,68.4 L99.73,90.43 A36.6,36.6 0 0 1 87.68,100.72 Z" fill="#b9525e"/><path d="M70.5,68.4 L87.68,100.72 A36.6,36.6 0 0 1 72.42,104.95 Z" fill="#9fd3cf"/><path d="M70.5,68.4 L72.42,104.95 A36.6,36.6 0 0 1 57.98,102.79 Z" fill="#e3dbd9"/><path d="M70.5,68.4 L57.98,102.79 A36.6,36.6 0 0 1 51.65,99.77 Z" fill="#6fa898"/><path d="M70.5,68.4 L51.65,99.77 A36.6,36.6 0 0 1 46.01,95.6 Z" fill="#e8c583"/><path d="M70.5,68.4 L46.01,95.6 A36.6,36.6 0 0 1 41.66,90.93 Z" fill="#9a8fd3"/><path d="M70.5,68.4 L41.66,90.93 A36.6,36.6 0 0 1 37.06,83.29 Z" fill="#28c4c8"/><path d="M70.5,68.4 L37.06,83.29 A36.6,36.6 0 0 1 35.32,78.49 Z" fill="#b15aa5"/><path d="M70.5,68.4 L35.32,78.49 A36.6,36.6 0 0 1 34.17,72.86 Z" fill="#9a1f66"/><path d="M70.5,68.4 L34.17,72.86 A36.6,36.6 0 0 1 33.92,69.68 Z" fill="#c7d3e3"/><path d="M70.5,68.4 L33.92,69.68 A36.6,36.6 0 0 1 33.99,65.85 Z" fill="#13688a"/><path d="M70.5,68.4 L33.99,65.85 A36.6,36.6 0 0 1 34.35,62.67 Z" fill="#cbc9a9"/><path d="M70.5,68.4 L34.35,62.67 A36.6,36.6 0 0 1 34.99,59.55 Z" fill="#b9525e"/><path d="M70.5,68.4 L34.99,59.55 A36.6,36.6 0 0 1 35.89,56.48 Z" fill="#9fd3cf"/><path d="M70.5,68.4 L35.89,56.48 A36.6,36.6 0 0 1 36.81,54.1 Z" fill="#e3dbd9"/><path d="M70.5,68.4 L36.81,54.1 A36.6,36.6 0 0 1 37.89,51.78 Z" fill="#6fa898"/><path d="M70.5,68.4 L37.89,51.78 A36.6,36.6 0 0 1 38.8,50.1 Z" fill="#e8c583"/><path d="M70.5,68.4 L38.8,50.1 A36.6,36.6 0 0 1 39.8,48.47 Z" fill="#9a8fd3"/><path d="M70.5,68.4 L39.8,48.47 A36.6,36.6 0 0 1 42.06,45.37 Z" fill="#28c4c8"/><path d="M70.5,68.4 L42.06,45.37 A36.6,36.6 0 0 1 44.17,42.98 Z" fill="#b15aa5"/><path d="M70.5,68.4 L44.17,42.98 A36.6,36.6 0 0 1 45.54,41.63 Z" fill="#9a1f66"/><path d="M70.5,68.4 L45.54,41.63 A36.6,36.6 0 0 1 47.47,39.96 Z" fill="#c7d3e3"/><path d="M70.5,68.4 L47.47,39.96 A36.6,36.6 0 0 1 49.25,38.6 Z" fill="#13688a"/><path d="M70.5,68.4 L49.25,38.6 A36.6,36.6 0 0 1 51.1,37.36 Z" fill="#cbc9a9"/><path d="M70.5,68.4 L51.1,37.36 A36.6,36.6 0 0 1 52.76,36.39 Z" fill="#b9525e"/><path d="M70.5,68.4 L52.76,36.39 A36.6,36.6 0 0 1 54.46,35.5 Z" fill="#9fd3cf"/><path d="M70.5,68.4 L54.46,35.5 A36.6,36.6 0 0 1 56.2,34.71 Z" fill="#e3dbd9"/><path d="M70.5,68.4 L56.2,34.71 A36.6,36.6 0 0 1 57.68,34.12 Z" fill="#6fa898"/><path d="M70.5,68.4 L57.68,34.12 A36.6,36.6 0 0 1 59.19,33.59 Z" fill="#e8c583"/><path d="M70.5,68.4 L59.19,33.59 A36.6,36.6 0 0 1 60.72,33.13 Z" fill="#9a8fd3"/><path d="M70.5,68.4 L60.72,33.13 A36.6,36.6 0 0 1 62.27,32.74 Z" fill="#28c4c8"/><path d="M70.5,68.4 L62.27,32.74 A36.6,36.6 0 0 1 63.52,32.47 Z" fill="#b15aa5"/><path d="M70.5,68.4 L63.52,32.47 A36.6,36.6 0 0 1 64.77,32.25 Z" fill="#9a1f66"/><path d="M70.5,68.4 L64.77,32.25 A36.6,36.6 0 0 1 66.04,32.07 Z" fill="#c7d3e3"/><path d="M70.5,68.4 L66.04,32.07 A36.6,36.6 0 0 1 67.31,31.94 Z" fill="#13688a"/><path d="M70.5,68.4 L67.31,31.94 A36.6,36.6 0 0 1 68.27,31.87 Z" fill="#cbc9a9"/><path d="M70.5,68.4 L68.27,31.87 A36.6,36.6 0 0 1 69.22,31.82 Z" fill="#b9525e"/><path d="M70.5,68.4 L69.22,31.82 A36.6,36.6 0 0 1 69.86,31.81 Z" fill="#9fd3cf"/><path d="M70.5,68.4 L69.86,31.81 A36.6,36.6 0 0 1 70.5,31.8 Z" fill="#e3dbd9"/><path d="M31,39 L34.6,57 L35.6,58.6" fill="none" stroke="#6b6b6b" stroke-width="0.6"/><path d="M29,53 L33,60 L34.4,61.4" fill="none" stroke="#6b6b6b" stroke-width="0.6"/><path d="M29,76.5 L32.8,70.5 L34,70" fill="none" stroke="#6b6b6b" stroke-width="0.6"/><path d="M29,90 L33.6,76 L34.6,74.5" fill="none" stroke="#6b6b6b" stroke-width="0.6"/><path d="M31,103 L36,80.5 L36.8,79" fill="none" stroke="#6b6b6b" stroke-width="0.6"/></svg>
<div class="t" style="top:199.18px;font-size:7.12px;line-height:8.54px;color:#e8f1f5;left:885.2px;width:400px;text-align:center;">23.5%</div>
<div class="t" style="top:183.98px;font-size:9.0px;line-height:10.8px;color:#595959;left:1010px;">De…</div>
<div class="t" style="top:196.98px;font-size:9.0px;line-height:10.8px;color:#595959;left:1007px;">Adi…</div>
<div class="t" style="top:210.88px;font-size:9.0px;line-height:10.8px;color:#595959;left:1011px;">Ai…</div>
<div class="t" style="top:223.88px;font-size:9.0px;line-height:10.8px;color:#595959;left:1010.5px;">Hi…</div>
<div class="t" style="top:237.18px;font-size:9.0px;line-height:10.8px;color:#595959;left:1007px;">Bik…</div>
<div class="t" style="top:251.41px;font-size:7.9px;line-height:9.48px;color:#595959;left:1010.5px;">RD…</div>
<div class="t" style="top:181.28px;font-size:9.0px;line-height:10.8px;color:#595959;left:1100.6px;">Minnk…</div>
<div class="t" style="top:226.52px;font-size:8.08px;line-height:9.7px;color:#595959;left:1113px;">Le …</div>
<div class="t" style="top:247.85px;font-size:7.81px;line-height:9.37px;color:#595959;left:1099px;">Feiss F…</div>
<div class="t" style="top:276.72px;font-size:8.49px;line-height:10.19px;color:#595959;left:870.7px;width:400px;text-align:center;">Pie chart</div>
<div style="left:999px;top:297px;width:148px;height:122px;background:#fff;border:1px solid #d9d9d9;box-sizing:border-box;"></div>
<div class="t" style="top:305.02px;font-size:8.3px;line-height:9.96px;color:#404040;font-weight:700;left:1006.8px;">Sales by ProductName</div>
<div class="t" style="top:327.16px;font-size:10.08px;line-height:12.1px;color:#595959;left:870.7px;width:400px;text-align:center;">ProductName</div>
<div style="left:1016.6px;top:343.8px;width:108.3px;height:0.9px;background:linear-gradient(90deg,rgba(19,104,138,0),#2a7791 25%,#2a7791 75%,rgba(19,104,138,0));opacity:1;"></div>
<div style="left:1053.5px;top:345.7px;width:34.7px;height:2px;background:#cbc9a9;opacity:0.75;"></div>
<div style="left:1055.6px;top:348.1px;width:30.3px;height:1.5px;background:#cfe3ea;opacity:0.75;"></div>
<div style="left:1062.1px;top:350.0px;width:17.3px;height:2px;background:#e8dcdc;opacity:0.75;"></div>
<div style="left:1063.3px;top:352.9px;width:15.0px;height:1.2px;background:#e8c583;opacity:0.75;"></div>
<div style="left:1063.9px;top:354.6px;width:13.9px;height:1.5px;background:#b7cfe6;opacity:0.75;"></div>
<div style="left:1064.7px;top:356.4px;width:12.1px;height:1.5px;background:#4fb9c9;opacity:0.75;"></div>
<div style="left:1065.7px;top:358.6px;width:10.1px;height:1.3px;background:#a3324a;opacity:0.75;"></div>
<div style="left:1066.5px;top:361.7px;width:8.7px;height:1.3px;background:#2b6b8a;opacity:0.75;"></div>
<div style="left:1066.9px;top:364.8px;width:7.8px;height:1.3px;background:#b9525e;opacity:0.75;"></div>
<div style="left:1067.9px;top:367.8px;width:5.8px;height:5.5px;background:#e3e6d5;opacity:0.75;"></div>
<div style="left:1068.6px;top:373.2px;width:4.3px;height:2px;background:#cfd0ea;opacity:0.75;"></div>
<div style="left:1068.8px;top:374.9px;width:4.0px;height:1.3px;background:#4a5a78;opacity:0.75;"></div>
<div style="left:1068.8px;top:376.8px;width:4.0px;height:1.3px;background:#6d6a86;opacity:0.75;"></div>
<div style="left:1068.9px;top:378.9px;width:3.8px;height:1.4px;background:#3c93a3;opacity:0.75;"></div>
<div style="left:1069.4px;top:382.2px;width:2.9px;height:1.2px;background:#a9a9a9;opacity:0.75;"></div>
<div style="left:1069.4px;top:384.4px;width:2.9px;height:1.2px;background:#dfe3d8;opacity:0.75;"></div>
<div style="left:1069.6px;top:387.3px;width:2.3px;height:1.2px;background:#a9d6d3;opacity:0.75;"></div>
<div style="left:1069.9px;top:390.6px;width:1.7px;height:1.2px;background:#28b7c8;opacity:0.75;"></div>
<div style="left:1070.1px;top:393.8px;width:1.4px;height:1.2px;background:#a3324a;opacity:0.75;"></div>
<div style="left:1070.2px;top:397.0px;width:1.2px;height:1px;background:#a9a9a9;opacity:0.75;"></div>
<div style="left:1070.2px;top:399.9px;width:1.2px;height:1px;background:#8c7f96;opacity:0.75;"></div>
<div style="left:1070.5px;top:404.1px;width:0.6px;height:0.8px;background:#c9c9c9;opacity:0.75;"></div>
<div style="left:1070.5px;top:406.7px;width:0.6px;height:0.8px;background:#d9d9d9;opacity:0.75;"></div>
<div class="t" style="top:424.11px;font-size:8.73px;line-height:10.48px;color:#595959;left:870.7px;width:400px;text-align:center;">Funnel chart</div>
<div style="left:999px;top:445px;width:148px;height:121.5px;background:#fff;border:1px solid #d9d9d9;box-sizing:border-box;"></div>
<div class="t" style="top:452.32px;font-size:8.3px;line-height:9.96px;color:#404040;font-weight:700;left:1006.8px;">Sales by ProductName</div>
<div style="left:1007px;top:473px;width:119px;height:1px;background:#cfcfcf;"></div>
<div style="left:1007px;top:500.7px;width:119px;height:1px;background:#cfcfcf;"></div>
<div class="t" style="top:482.97px;font-size:9.86px;line-height:11.83px;color:#595959;left:865.5999999999999px;width:400px;text-align:center;">Lenin Jeansshorts</div>
<div class="t" style="top:516.16px;font-size:8.42px;line-height:10.1px;color:#404040;font-weight:700;left:865.5999999999999px;width:400px;text-align:center;">Sales</div>
<div style="left:1007px;top:530px;width:119px;height:19.5px;overflow:hidden;border-bottom:1px solid #e0e0e0;"><div class="t" style="left:17px;top:3.4px;font-size:21.4px;line-height:26px;color:#3f7db8;">$ 215.05</div></div>
<div style="left:1126px;top:469px;width:13px;height:82px;background:#fafafa;"></div>
<div style="left:1127.8px;top:470.4px;width:5px;height:12px;background:#bdbdbd;border-radius:2.5px;"></div>
<div style="left:1007px;top:549.5px;width:132px;height:9px;background:#f7f7f7;"></div>
<div style="left:1008.8px;top:551.6px;width:93.8px;height:5px;background:#c9c9c9;border-radius:2.5px;"></div>
<div class="t" style="top:572.16px;font-size:8.62px;line-height:10.34px;color:#595959;left:870.7px;width:400px;text-align:center;">Multi KPI</div>
<div style="left:999px;top:592px;width:148px;height:64px;background:#fff;border:1px solid #d9d9d9;box-sizing:border-box;border-bottom:none;"></div>
<div class="t" style="top:599.92px;font-size:8.3px;line-height:9.96px;color:#404040;font-weight:700;left:1006.8px;">Sales by ProductName</div>
<div class="t" style="left:1035.6px;top:667.8px;font-size:15px;line-height:15px;color:#62c26a;transform-origin:0 0;transform:rotate(-90deg) scaleX(0.9);">Boots</div>
<div class="t" style="left:1056.1px;top:656.6px;font-size:22.6px;line-height:22.6px;color:#3e77b3;transform-origin:0 0;transform:rotate(-90deg) scaleX(0.9);">Suit</div>
<div class="t" style="left:1098.7px;top:633.8px;font-size:16.5px;line-height:16.5px;color:#7fd07f;transform-origin:0 0;transform:rotate(90deg) scaleX(0.9);">Calvin</div>
<div class="t" style="left:1119px;top:644.4px;font-size:15.4px;line-height:15.4px;color:#a9e08c;transform-origin:0 0;transform:rotate(90deg) scaleX(0.9);">Tights</div>
<div style="left:0;top:654px;width:1161px;height:11px;background:linear-gradient(#fafafb,#f4f5f7 3px);"></div>
</div></body></html>
